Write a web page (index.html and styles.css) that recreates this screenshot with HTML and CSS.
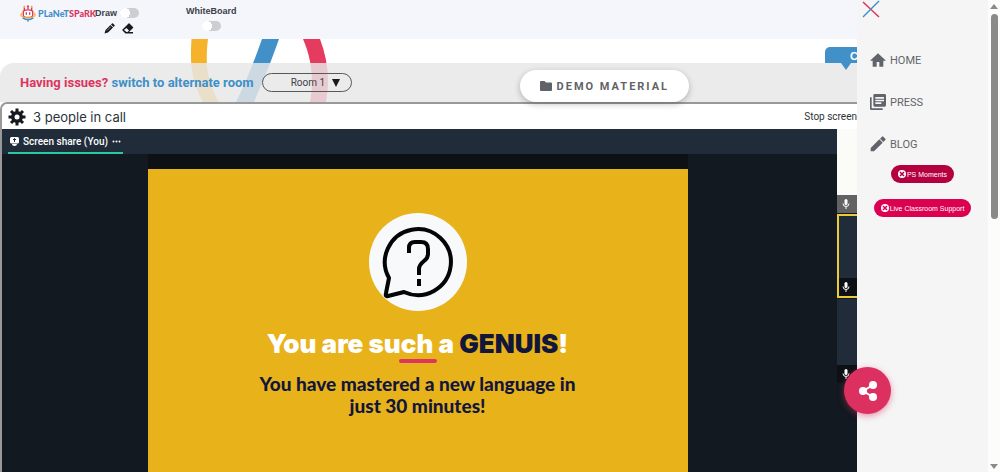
FILE: index.html
```html
<!DOCTYPE html>
<html lang="en">
<head>
    <meta charset="UTF-8" />
    <meta name="viewport" content="width=device-width, initial-scale=1.0"/>
    <title>PlanetSpark Classroom</title>
    <link rel="stylesheet" href="styles.css">
</head>
<body>
<main class="classroom">
    <header class="topbar">
        <a class="logo" href="#">
            <svg width="16" height="17" viewBox="0 0 48 50" fill="none" stroke-width="4">
                <path d="M13 15V7M24 12V3M35 15V7" stroke="#dc3560"/>
                <circle cx="13" cy="5" r="3" fill="#f5a623"/>
                <circle cx="24" cy="3" r="3" fill="#dc3560"/>
                <circle cx="35" cy="5" r="3" fill="#f5a623"/>
                <path d="M10 30V18Q24 10 38 18V30Q38 37 24 37T10 30Z" stroke="#dc3560" fill="#fff"/>
                <path d="M19 21v8M29 21v8" stroke="#dc3560"/>
                <path d="M9 22Q-2 29 6 34Q24 42 42 34Q50 29 39 22" stroke="#f5b32c"/>
                <path d="M8 38Q24 49 40 38M24 43v7" stroke="#3f8fc8"/>
            </svg>
            <span class="logo-text">PLaNeT<b>SPaRK</b></span>
        </a>
        <div class="draw-tools">
            <label class="switch-row">Draw <input class="switch" type="checkbox"></label>
            <div class="tool-buttons">
                <button aria-label="Pencil">
                    <svg width="11" height="11" viewBox="0 0 22 22" fill="#17191c">
                        <path d="M1 21l2-7L13 4l5 5L8 19zM14 3l2-2q1-1 2 0l3 3q1 1 0 2l-2 2z"/>
                        <path d="M6 15l8-8" stroke="#f4f6fb" stroke-width="1"/>
                    </svg>
                </button>
                <button aria-label="Eraser">
                    <svg width="12" height="11" viewBox="0 0 24 22" fill="#17191c">
                        <path d="M13 1q1-1 2 0l7 7q1 1 0 2l-8 8h8v3H7l-6-6q-1-1 0-2zM4 14l5 4h2l3-3-5-5z" fill-rule="evenodd"/>
                    </svg>
                </button>
            </div>
        </div>
        <label class="board-toggle">WhiteBoard <input class="switch" type="checkbox"></label>
    </header>

    <section class="banner">
        <svg class="swoosh" width="138" height="63" viewBox="0 0 138 63">
            <path d="M1.500 0C0 25 1 40 13 63H29C17 42 15 25 18 0Z" fill="#f5b32c"/>
            <path d="M72 0H89C82 20 74 40 64 63H46C57 41 65 20 72 0Z" fill="#4190c7"/>
            <path d="M113 0H130C138 21 140 42 136 63H120C124 41 122 21 113 0Z" fill="#e43b5f"/>
        </svg>
        <div class="room-bar">
            <label class="room-label" for="room"><span>Having issues?</span> switch to alternate room</label>
            <div class="room-select">
                <select id="room">
                    <option>Room 1</option>
                </select>
                <span class="caret"></span>
            </div>
            <button class="demo-button">
                <svg width="12" height="10" viewBox="0 0 24 20" fill="#5f6368"><path d="M2 0h7l3 3h10q2 0 2 2v13q0 2-2 2H2q-2 0-2-2V2q0-2 2-2z"/></svg>
                DEMO MATERIAL
            </button>
        </div>
        <div class="bubble">C</div>
    </section>

    <section class="call">
        <div class="call-header">
            <svg width="18" height="18" viewBox="-9 -9 18 18" fill="#141a20">
                <g stroke="#141a20" stroke-width="3">
                    <path d="M0-8.500V8.500M-8.500 0H8.500M-6-6L6 6M-6 6L6-6"/>
                </g>
                <circle r="6"/>
                <circle r="2.500" fill="#fff"/>
            </svg>
            <span class="people">3 people in call</span>
            <button class="stop-button">Stop screen</button>
        </div>
        <div class="call-body">
            <div class="share">
                <div class="tabs">
                    <button class="tab">
                        <svg width="9" height="9" viewBox="0 0 18 18"><path d="M3 0h12q3 0 3 3v7q0 3-3 3H3q-3 0-3-3V3q0-3 3-3zM4 14h10q0 4-5 4t-5-4z" fill="#fff"/><path d="M9 3v7M6 6l3-3 3 3" stroke="#202c39" stroke-width="2" fill="none"/></svg>
                        Screen share (You)
                        <svg width="9" height="3" viewBox="0 0 9 3" fill="#fff"><circle cx="1.500" cy="1.500" r="1"/><circle cx="4.500" cy="1.500" r="1"/><circle cx="7.500" cy="1.500" r="1"/></svg>
                    </button>
                </div>
                <div class="stage">
                    <div class="slide">
                        <svg class="question" width="98" height="98" viewBox="0 0 98 98" fill="none" stroke="#050505" stroke-width="4">
                            <circle cx="49" cy="49" r="49" fill="#f8f9fb" stroke="none"/>
                            <path d="M20 65A33 33 0 1 1 35 79L19 83Q16 84 17 80Z" stroke-linejoin="round"/>
                            <path d="M40 40V35Q40 29 46 29H52Q59 29 59 36V41Q59 45 55 48Q50 52 50 56V62M50 66V73"/>
                        </svg>
                        <h1>You are such a <span>GENUIS</span>!</h1>
                        <hr>
                        <p>You have mastered a new language in just 30 minutes!</p>
                    </div>
                </div>
            </div>
            <div class="tiles">
                <div class="tile light"><div class="tile-foot"><svg width="8" height="10" viewBox="0 0 16 20"><rect x="5" width="6" height="12" rx="3" fill="#fff"/><path d="M2 9q0 6 6 6t6-6M8 15v5" stroke="#fff" stroke-width="2" fill="none"/></svg></div></div>
                <div class="tile speaking"><div class="tile-foot"><svg width="8" height="10" viewBox="0 0 16 20"><rect x="5" width="6" height="12" rx="3" fill="#fff"/><path d="M2 9q0 6 6 6t6-6M8 15v5" stroke="#fff" stroke-width="2" fill="none"/></svg></div></div>
                <div class="tile"><div class="tile-foot"><svg width="8" height="10" viewBox="0 0 16 20"><rect x="5" width="6" height="12" rx="3" fill="#fff"/><path d="M2 9q0 6 6 6t6-6M8 15v5" stroke="#fff" stroke-width="2" fill="none"/></svg></div></div>
            </div>
        </div>
    </section>
</main>

<aside class="drawer">
    <button class="close" aria-label="Close menu">
        <svg width="18" height="18" viewBox="0 0 18 18" stroke-width="1.500"><path d="M1 2l16 15" stroke="#dc3560"/><path d="M17 1L1 17" stroke="#3f8fc8"/></svg>
    </button>
    <nav>
        <a href="#">
            <svg width="16" height="16" viewBox="0 0 24 24" fill="#62646b"><path d="M10 22v-7h4v7h6V13h4L12 2 0 13h4v9z"/></svg>
            HOME
        </a>
        <a href="#">
            <svg width="16" height="16" viewBox="0 0 24 24" fill="#62646b"><path d="M2.500 5H0v17q0 2 2 2h17v-2.500H2.500zM22 0H7Q5 0 5 2v15q0 2 2 2h15q2 0 2-2V2q0-2-2-2zm-1 11H8V8.500h13zm-4 4H8v-2.500h9zm4-8H8V4.500h13z"/></svg>
            PRESS
        </a>
        <a href="#">
            <svg width="16" height="16" viewBox="0 0 24 24" fill="#62646b"><path d="M1 18v5h5L19 10l-5-5zM23 6q1-1 0-2l-3-3q-1-1-2 0l-3 3 5 5z"/></svg>
            BLOG
        </a>
    </nav>
    <button class="pill dark">
        <svg width="8" height="8" viewBox="0 0 16 16"><circle cx="8" cy="8" r="8" fill="#fff"/><path d="M4 4l8 8M12 4l-8 8" stroke="#b5003f" stroke-width="3"/></svg>
        PS Moments
    </button>
    <button class="pill">
        <svg width="8" height="8" viewBox="0 0 16 16"><circle cx="8" cy="8" r="8" fill="#fff"/><path d="M4 4l8 8M12 4l-8 8" stroke="#dc0050" stroke-width="3"/></svg>
        Live Classroom Support
    </button>
</aside>

<div class="scrollbar">
    <span class="arrow up"></span>
    <span class="thumb"></span>
    <span class="arrow down"></span>
</div>

<button class="share-fab" aria-label="Share">
    <svg width="18" height="20" viewBox="0 0 18 20" fill="#fff"><path d="M14 4L4 10l10 6" fill="none" stroke="#fff" stroke-width="2"/><circle cx="14" cy="4" r="4"/><circle cx="4" cy="10" r="4"/><circle cx="14" cy="16" r="4"/></svg>
</button>
</body>
</html>
```
FILE: styles.css
```css
* {
    box-sizing: border-box;
}

body {
    margin: 0;
    height: 100vh;
    display: flex;
    position: relative;
    overflow: hidden;
    font-family: "Liberation Sans", Arial, sans-serif;
    background: #fff;
}

button {
    border: none;
    background: none;
    padding: 0;
    font: inherit;
    cursor: pointer;
}

svg {
    flex-shrink: 0;
}

a {
    text-decoration: none;
}

.classroom {
    flex: 1;
    min-width: 0;
    display: flex;
    flex-direction: column;
    overflow: hidden;
}

/* top bar */
.topbar {
    height: 39px;
    padding: 5px 0 0 20px;
    display: flex;
    align-items: flex-start;
    background: #f4f6fb;
    font-size: 9px;
    line-height: 12px;
    font-weight: bold;
    color: #3c4046;
}

.logo {
    width: 75px;
    display: flex;
    align-items: center;
    gap: 2px;
    white-space: nowrap;
}

.logo-text {
    font-family: Lato, sans-serif;
    font-size: 9px;
    font-weight: 900;
    color: #3f8fc8;
}

.logo-text b {
    color: #dc3560;
}

.draw-tools {
    width: 91px;
}

.switch-row {
    display: flex;
    align-items: center;
    gap: 3px;
    height: 16px;
}

.switch {
    appearance: none;
    width: 19px;
    height: 10px;
    margin: 0;
    border-radius: 5px;
    background: radial-gradient(circle at 5px 5px, #fff 5px, #cdced1 5px);
}

.tool-buttons {
    display: flex;
    gap: 7px;
    padding: 2px 0 0 9px;
}

.tool-buttons svg,
.close svg {
    display: block;
}

.board-toggle {
    display: flex;
    flex-direction: column;
    align-items: center;
    gap: 4px;
}

/* room banner */
.banner {
    position: relative;
    z-index: 1;
    padding-top: 24px;
}

.swoosh {
    position: absolute;
    top: 0;
    left: 190px;
}

.room-bar {
    position: relative;
    display: flex;
    align-items: center;
    height: 39px;
    padding-left: 20px;
    border-top-left-radius: 14px;
    background: rgba(231, 231, 231, 0.84);
}

.room-label {
    font-family: Roboto, sans-serif;
    font-size: 13px;
    font-weight: bold;
    color: #3f8fc8;
    white-space: nowrap;
}

.room-label span {
    color: #dc3560;
}

.room-select {
    position: relative;
    margin-left: 8px;
}

.room-select select {
    appearance: none;
    display: block;
    width: 90px;
    height: 19px;
    padding: 0 20px 0 28px;
    border: 1px solid #55585c;
    border-radius: 10px;
    background: transparent;
    font-family: Roboto, sans-serif;
    font-size: 10px;
    color: #3c4046;
}

.caret {
    position: absolute;
    top: 6px;
    right: 12px;
    border: 4px solid transparent;
    border-top: 8px solid #17191c;
    border-bottom: 0;
    pointer-events: none;
}

.demo-button {
    align-self: flex-end;
    display: flex;
    align-items: center;
    gap: 5px;
    height: 32px;
    margin: 0 auto;
    padding: 0 20px;
    border-radius: 16px;
    background: #fff;
    box-shadow: 0 2px 6px rgba(0, 0, 0, 0.25);
    font-family: Roboto, sans-serif;
    font-size: 11px;
    font-weight: bold;
    letter-spacing: 2px;
    color: #5f6368;
}

.bubble {
    position: absolute;
    top: 8px;
    right: 0;
    width: 32px;
    height: 16px;
    padding-left: 25px;
    border-top-left-radius: 5px;
    background: #4190c7;
    color: #fff;
    font-size: 11px;
    line-height: 18px;
    font-weight: bold;
}

.bubble::after {
    content: "";
    position: absolute;
    top: 16px;
    left: 16px;
    border: 5px solid transparent;
    border-top: 7px solid #4190c7;
    border-bottom: 0;
}

/* call */
.call {
    flex: 1;
    min-height: 0;
    display: flex;
    flex-direction: column;
    border: 2px solid #999;
    border-width: 2px 0 0 2px;
    border-top-left-radius: 7px;
    overflow: hidden;
}

.call-header {
    display: flex;
    align-items: center;
    gap: 7px;
    height: 25px;
    padding-left: 6px;
    color: #2b333b;
}

.people {
    font-family: Inter, sans-serif;
    font-size: 13px;
}

.stop-button {
    margin-left: auto;
    font-family: Roboto, sans-serif;
    font-size: 10px;
    color: #2b333b;
}

.call-body {
    flex: 1;
    min-height: 0;
    display: flex;
    background: #121920;
}

.share {
    flex: 1;
    display: flex;
    flex-direction: column;
}

.tabs {
    height: 25px;
    padding-left: 6px;
    display: flex;
    background: #202c39;
}

.tab {
    display: flex;
    align-items: center;
    gap: 4px;
    padding: 2px 2px 0;
    border-bottom: 2px solid #2bc9a0;
    font-family: Roboto, sans-serif;
    font-size: 10px;
    font-weight: 500;
    color: #fff;
}

.stage {
    flex: 1;
    display: flex;
    justify-content: center;
    padding-right: 4px;
}

.slide {
    width: 100%;
    max-width: 540px;
    padding: 44px 100px 0;
    border-top: 15px solid #0e1113;
    background: #e8b21b;
    text-align: center;
    color: #12163a;
}

.question {
    display: block;
    margin: 0 auto;
}

.slide h1 {
    display: flex;
    justify-content: center;
    margin: 18px 0 0;
    font-family: Inter, sans-serif;
    font-size: 26px;
    line-height: 30px;
    font-weight: 900;
    color: #fff;
    white-space: pre;
}

.slide h1 span {
    color: #12163a;
}

.slide hr {
    width: 38px;
    height: 4px;
    margin: 0 auto 10px;
    border: none;
    border-radius: 2px;
    background: #dc3560;
}

.slide p {
    margin: 0;
    font-family: Lato, sans-serif;
    font-size: 19px;
    line-height: 22px;
    font-weight: 900;
}

.tiles {
    width: 20px;
    display: flex;
    flex-direction: column;
    gap: 1px;
}

.tile {
    height: 84px;
    display: flex;
    flex-direction: column;
    justify-content: flex-end;
    background: #202c39;
}

.tile.light {
    background: #fbfbf7;
}

.tile.speaking {
    border: 2px solid #e9cc3a;
    border-right: none;
}

.tile-foot {
    display: flex;
    align-items: center;
    height: 18px;
    padding-left: 5px;
    background: #0d1115;
}

.speaking .tile-foot {
    padding-left: 3px;
}

.light .tile-foot {
    background: #626262;
}

/* drawer */
.drawer {
    width: 131px;
    display: flex;
    flex-direction: column;
    align-items: center;
    background: #f5f5f5;
}

.close {
    align-self: flex-start;
    margin-left: 5px;
}

nav {
    align-self: stretch;
    padding: 21px 0 0 13px;
}

nav a {
    display: flex;
    align-items: center;
    gap: 4px;
    height: 42px;
    font-family: Roboto, sans-serif;
    font-size: 11px;
    color: #62646b;
}

.pill {
    display: flex;
    align-items: center;
    gap: 1px;
    height: 18px;
    margin-bottom: 16px;
    padding: 0 7px;
    border-radius: 9px;
    background: #dc0050;
    font-size: 7px;
    color: #fff;
}

.pill.dark {
    background: #b5003f;
}

.scrollbar {
    width: 12px;
    display: flex;
    flex-direction: column;
    align-items: center;
    padding: 4px 0 3px;
    background: #fcfcfa;
}

.arrow {
    border: 4px solid transparent;
}

.arrow.up {
    border-top: 0;
    border-bottom: 5px solid #8a8a8a;
}

.arrow.down {
    margin-top: auto;
    border-bottom: 0;
    border-top: 5px solid #8a8a8a;
}

.thumb {
    width: 7px;
    height: 44%;
    margin-top: 5px;
    border-radius: 4px;
    background: #8a8a8a;
}

.share-fab {
    position: absolute;
    right: 109px;
    bottom: 58px;
    z-index: 2;
    width: 47px;
    height: 47px;
    display: flex;
    align-items: center;
    justify-content: center;
    border-radius: 50%;
    background: #dc3160;
    box-shadow: 0 2px 6px rgba(220, 49, 96, 0.5);
}
```
